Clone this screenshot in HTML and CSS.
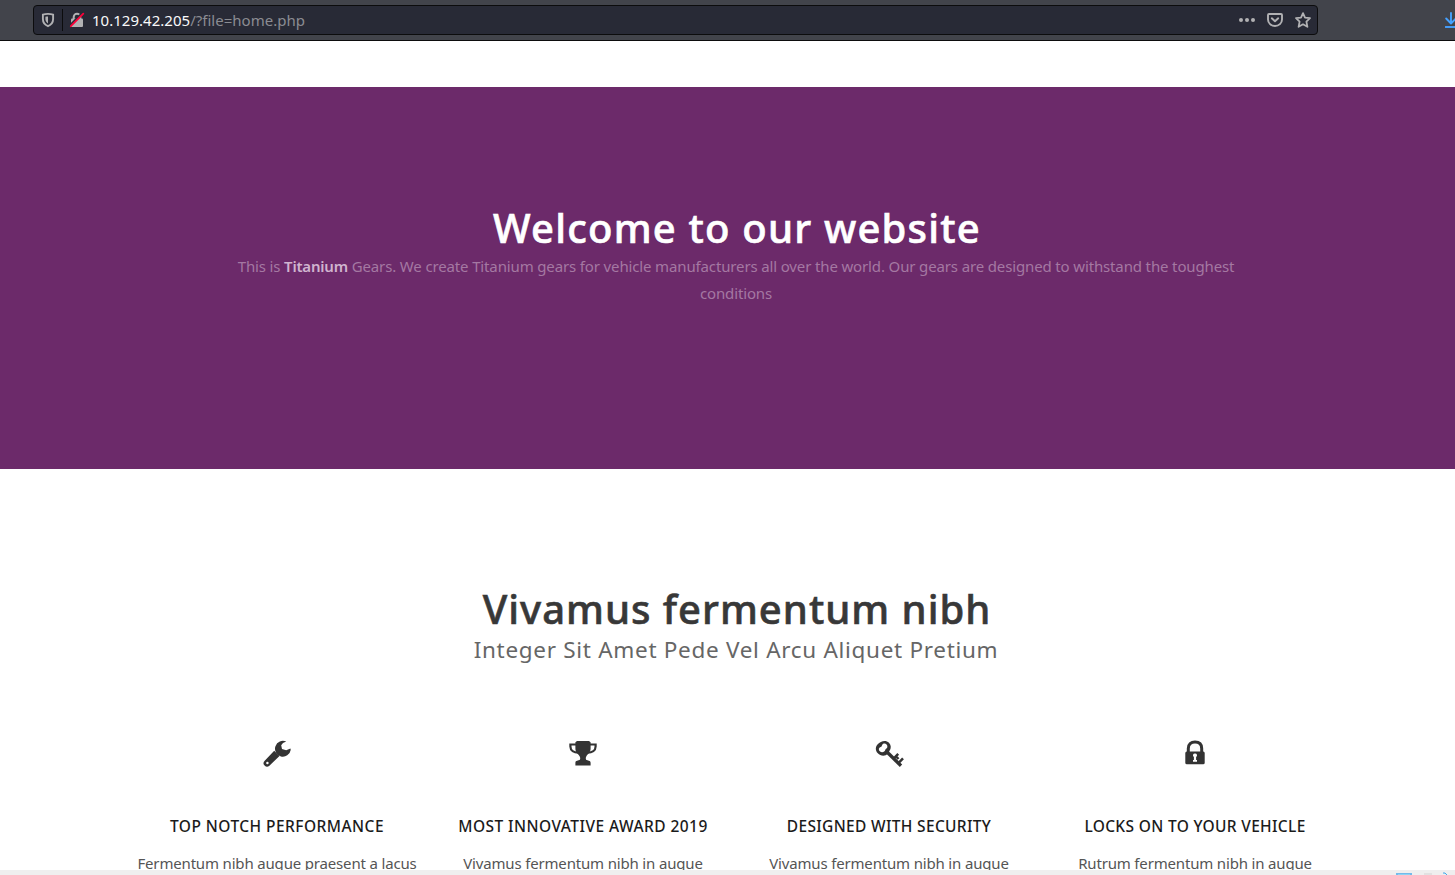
FILE: index.html
```html
<!DOCTYPE html>
<html lang="en">
<head>
<meta charset="utf-8">
<title>Titanium Gears</title>
<link rel="stylesheet" href="styles.css">
</head>
<body>
<header class="toolbar">
  <div class="urlbar">
    <svg class="shield" width="16" height="16" viewBox="0 0 16 16"><path d="M8 1.900c2 0 3.700.3 5.100.8v4.400c0 3.500-1.900 5.800-5.100 7.100-3.200-1.300-5.100-3.600-5.100-7.100V2.700C4.300 2.200 6 1.900 8 1.900z" fill="none" stroke="#b1b1b3" stroke-width="1.900"/><path d="M8 4.500v6.900C6.300 10.400 5.400 9 5.400 7.100V4.800C6.200 4.600 7.100 4.500 8 4.500z" fill="#b1b1b3"/></svg>
    <span class="separator"></span>
    <svg class="insecure" width="16" height="16" viewBox="0 0 16 16"><path d="M4.700 7V5a3.300 3.300 0 0 1 6.600 0v2" fill="none" stroke="#b1b1b3" stroke-width="2"/><rect x="2" y="6.500" width="12" height="8.500" rx="1" fill="#b1b1b3"/><path d="M.8 13.500 13.500 .8" stroke="#282a36" stroke-width="2"/><path d="M1.800 14.200 14.300 1.600" stroke="#ff0039" stroke-width="1.800" stroke-linecap="round"/></svg>
    <span class="address"><span class="host">10.129.42.205</span>/?file=home.php</span>
    <span class="actions">
      <svg width="16" height="16" viewBox="0 0 16 16" fill="#b1b1b3"><circle cx="2" cy="8" r="2"/><circle cx="8" cy="8" r="2"/><circle cx="14" cy="8" r="2"/></svg>
      <svg width="16" height="16" viewBox="0 0 16 16" fill="none" stroke="#b1b1b3" stroke-width="1.900" stroke-linejoin="round" stroke-linecap="round"><path d="M2 2h12a1 1 0 0 1 1 1v4.500a7 6.500 0 0 1-14 0V3a1 1 0 0 1 1-1z"/><path d="m4.800 6.300 3.200 3 3.200-3"/></svg>
      <svg width="16" height="16" viewBox="0 0 16 16" fill="none" stroke="#b1b1b3" stroke-width="1.800" stroke-linejoin="round"><path d="m8 1.100 2 4.500 5 .5-3.600 3.500 1 5.200L8 12.300l-4.400 2.500 1-5.200L1 6.100l5-.5z"/></svg>
    </span>
  </div>
  <svg class="download" width="16" height="16" viewBox="0 0 16 16" fill="none" stroke="#45a1ff" stroke-width="1.900" stroke-linecap="round" stroke-linejoin="round"><path d="M6 1v10M1.200 6.500 6 11.500 10.800 6.500"/><path d="M1 15h10" stroke-linecap="square"/></svg>
</header>
<main class="page">
  <section class="banner">
    <h1 class="heading">Welcome to our website</h1>
    <p class="intro">This is <strong>Titanium</strong> Gears. We create Titanium gears for vehicle manufacturers all over the world. Our gears are designed to withstand the toughest<br>conditions</p>
  </section>
  <section class="features">
    <h2 class="heading title">Vivamus fermentum nibh</h2>
    <p class="byline">Integer Sit Amet Pede Vel Arcu Aliquet Pretium</p>
    <div class="columns">
      <article class="column">
        <svg class="icon" width="32" height="32" viewBox="0 0 32 32"><path d="M13.200 12.800 3.700 22.800a3.300 3.300 0 0 0 4.700 4.900L18.500 18z" fill="#333"/><path d="m14.600 11.800 5.800 6" stroke="#fff" stroke-width="1"/><circle cx="6.400" cy="25" r="1.200" fill="#fff"/><path d="M25.200 3.600A7.900 7.900 0 1 0 29.700 12l-.2-1.400-4.300 1.600-4.200-1.300-.8-3.600 1.800-2.200z" fill="#333"/></svg>
        <h3>TOP NOTCH PERFORMANCE</h3>
        <p>Fermentum nibh augue praesent a lacus</p>
      </article>
      <article class="column">
        <svg class="icon" width="32" height="32" viewBox="0 0 32 32"><path d="M9 6.500H3.400v2c0 4 3.500 6.200 8 6.200M23 6.500h5.600v2c0 4-3.500 6.200-8 6.200" fill="none" stroke="#333" stroke-width="2.200"/><path d="M10 3h12l1.600 1.200v6.300c0 4-2.700 5.400-4.200 7.700-.7 1.200-.8 2.300-.3 3.500 1.400.9 4.500.5 4.500 3v2.800H8.400v-2.800c0-2.500 3.100-2.100 4.500-3 .5-1.200.4-2.300-.3-3.500-1.500-2.300-4.200-3.700-4.200-7.700V4.200z" fill="#333"/></svg>
        <h3>MOST INNOVATIVE AWARD 2019</h3>
        <p>Vivamus fermentum nibh in augue</p>
      </article>
      <article class="column">
        <svg class="icon" width="32" height="32" viewBox="0 0 32 32"><path d="M14.800 15.800c-2.600 2.700-7.400 2.300-10-.5-2.700-2.900-2.500-6.500-.1-9 2.900-3.200 8-4.700 11.300-1.500 2.300 2.300 2.300 5.700.4 8.300-.5.900-.9 1.900-1.600 2.700z" fill="#333"/><path d="M12.200 12.100c-.5 2.300-3.700 2.900-5.400 1.200-1.500-1.500-1.200-3.900.8-4.400 1.200-.3 1.100-1.200 1.600-2 .8-1.500 3.100-1.800 4.400-.5 1.500 1.600.8 3.900-.9 4.500z" fill="#fff"/><path d="M13.500 13.500 28 27.800" stroke="#333" stroke-width="3.400"/><path d="m20.200 21 5-5.200M25 25.500l5-5.200M22.700 18l2.800 3" stroke="#333" stroke-width="2.500"/></svg>
        <h3 class="tight">DESIGNED WITH SECURITY</h3>
        <p>Vivamus fermentum nibh in augue</p>
      </article>
      <article class="column">
        <svg class="icon" width="32" height="32" viewBox="0 0 32 32"><path d="M9.300 15v-4.500C9.300 6.300 12 4.100 16 4.100s6.700 2.200 6.700 6.400V15" fill="none" stroke="#333" stroke-width="3"/><rect x="6.300" y="13.500" width="19.400" height="12.800" rx="1.500" fill="#333"/><path d="M16 15.400a2 2 0 0 1 1.100 3.700V22h.9v1.800h-4V22h.9v-2.900A2 2 0 0 1 16 15.400z" fill="#fff"/></svg>
        <h3 class="tight">LOCKS ON TO YOUR VEHICLE</h3>
        <p>Rutrum fermentum nibh in augue</p>
      </article>
    </div>
  </section>
</main>
<footer class="panel">
  <svg width="60" height="5" viewBox="0 0 60 5"><path d="M1 4h16" stroke="#4aa8e8" stroke-width="1.500"/><path d="M3 5h12" stroke="#a9ecff"/><path d="M29 4h8" stroke="#d3d3d3"/><path d="M48 3h2l2 2" stroke="#4aa8e8" fill="#a9ecff"/></svg>
</footer>
</body>
</html>
```

FILE: styles.css
```css
* { box-sizing: border-box; margin: 0; }
body { display: flex; flex-direction: column; height: 875px; overflow: hidden; background: #fff; font: 15px/27px "Noto Sans", sans-serif; }
.toolbar { display: flex; align-items: flex-start; flex: 0 0 41px; padding: 5px 0 0 33px; background: #42444b; border-bottom: 1px solid #0c0c0d; overflow: hidden; }
.urlbar { display: flex; align-items: center; flex: 0 0 1285px; height: 30px; padding: 0 6px; background: #282a36; border: 1px solid #0c0c0d; border-radius: 4px; }
.urlbar svg, .download { display: block; flex: none; }
.separator { width: 1px; height: 22px; margin: 0 6px; background: #0c0c0d; }
.address { margin-left: 7px; color: #8b8c92; font-size: 15px; line-height: 28px; letter-spacing: 0.02px; }
.host { color: #f9f9fa; }
.actions { display: flex; gap: 12px; margin-left: auto; }
.download { margin: 7px 0 0 127px; }
.page { flex: 1; min-height: 0; width: 1472px; padding-top: 46px; overflow: hidden; text-align: center; }
.banner { height: 382px; padding: 115px 136px 0; background: #6c2a6a; color: #a478a2; }
.heading { padding-left: 2px; color: #fff; font-size: 40px; line-height: 52px; font-weight: 500; letter-spacing: 1.2px; white-space: nowrap; -webkit-text-stroke: 0.6px currentColor; }
.intro { margin-top: -1px; white-space: nowrap; letter-spacing: -0.14px; }
.intro strong { color: #d0b4cf; font-weight: 600; letter-spacing: -0.2px; }
.features { padding: 114px 136px 0; }
.title { color: #383838; letter-spacing: 1px; }
.byline { margin-top: 1px; color: #666; font-size: 22.5px; line-height: 28px; letter-spacing: 0.7px; }
.columns { display: grid; grid-template-columns: repeat(4, 282px); gap: 24px; margin-top: 74px; }
.column { display: flex; flex-direction: column; align-items: center; white-space: nowrap; color: #555; letter-spacing: -0.17px; }
.icon { display: block; }
.column h3 { margin-top: 43px; color: #1b1b1b; font-size: 15.5px; line-height: 27px; font-weight: 500; letter-spacing: 0.45px; }
.column h3.tight { letter-spacing: 0.33px; }
.column p { margin-top: 10px; }
.panel { display: flex; justify-content: flex-end; flex: 0 0 5px; background: #efefef; }
.panel svg { display: block; }
```
